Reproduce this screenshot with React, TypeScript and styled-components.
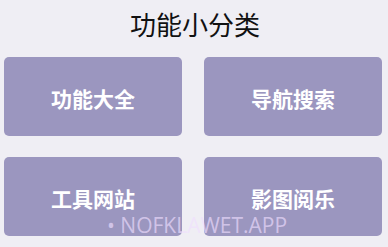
import React from "react";
import styled, { createGlobalStyle } from "styled-components";

const Global = createGlobalStyle`
  html, body { margin: 0; padding: 0; background: #efeef4; }
  body { font-family: "Noto Sans CJK SC", "Noto Sans", sans-serif; }
`;

const Page = styled.div`
  position: relative;
  width: 388px;
  height: 247px;
  background: #efeef4;
  overflow: hidden;
  display: flex;
  flex-direction: column;
  box-sizing: border-box;
  padding: 0 6px 0 4px;
`;

const Title = styled.h1`
  margin: 0;
  height: 50px;
  box-sizing: border-box;
  padding: 0 0 4px 4px;
  display: flex;
  align-items: center;
  justify-content: center;
  font-size: 26px;
  font-weight: 400;
  color: #111;
`;

const Grid = styled.div`
  margin-top: 7px;
  display: grid;
  grid-template-columns: 178px 178px;
  grid-auto-rows: 79px;
  column-gap: 22px;
  row-gap: 21px;
`;

const Card = styled.div`
  background: #9b96bf;
  border-radius: 5px;
  display: flex;
  align-items: center;
  justify-content: center;
  color: #fff;
  font-size: 21px;
  font-weight: 700;
  padding-top: 2px;
  box-sizing: border-box;
`;

const Watermark = styled.div`
  position: absolute;
  left: 107px;
  top: 211px;
  font-family: "Open Sans", "Noto Sans", sans-serif;
  font-size: 21px;
  font-weight: 400;
  color: rgba(240, 222, 255, 0.65);
  white-space: nowrap;
`;

const items = ["功能大全", "导航搜索", "工具网站", "影图阅乐"];

export default function App() {
  return (
    <Page>
      <Global />
      <Title>功能小分类</Title>
      <Grid>
        {items.map((t) => (
          <Card key={t}>{t}</Card>
        ))}
      </Grid>
      <Watermark>• NOFKLAWET.APP</Watermark>
    </Page>
  );
}
